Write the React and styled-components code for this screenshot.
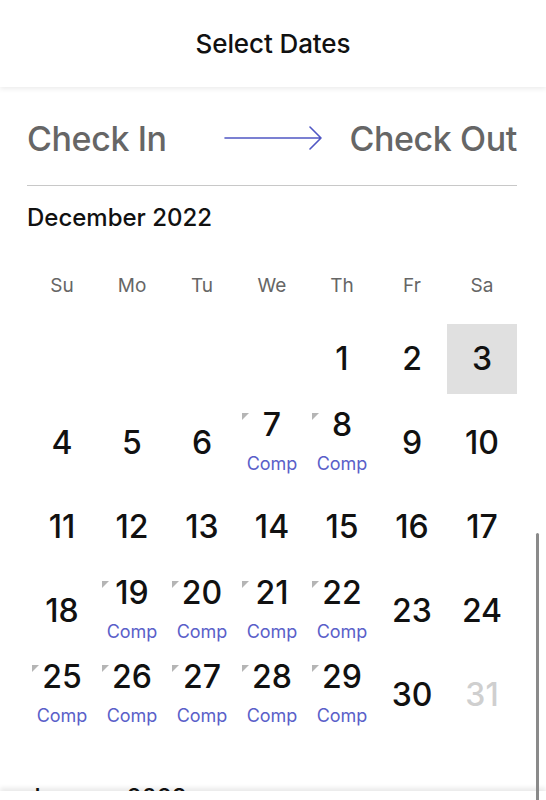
import React from "react";
import styled, { createGlobalStyle } from "styled-components";

const Global = createGlobalStyle`
  html, body { margin: 0; padding: 0; background: #fff; }
  body { font-family: Inter, "Noto Sans", sans-serif; overflow: hidden; height: 800px; }
  * { box-sizing: border-box; }
`;

const Page = styled.div`
  position: relative;
  width: 546px;
  height: 800px;
  overflow: hidden;
  background: #fff;
`;

const Header = styled.header`
  height: 87px;
  display: flex;
  align-items: center;
  justify-content: center;
  font-size: 26px;
  font-weight: 500;
  letter-spacing: -0.1px;
  color: #111;
  box-shadow: 0 2px 5px rgba(0, 0, 0, 0.08);
  position: relative;
  z-index: 2;
`;

const Body = styled.main`
  padding: 0 29px 0 27px;
`;

const RangeRow = styled.div`
  height: 60px;
  margin-top: 21px;
  display: grid;
  grid-template-columns: 1fr auto 1fr;
  align-items: center;
  font-size: 34px;
  letter-spacing: -0.4px;
  color: #666;
  font-weight: 500;
`;

const RangeLabel = styled.span`
  justify-self: ${(p) => (p.$end ? "end" : "start")};
`;

const ArrowBox = styled.span`
  display: flex;
  margin-left: 4px;
`;

const Divider = styled.hr`
  margin: 17px 0 0;
  border: 0;
  border-top: 1.5px solid #c8c8c8;
`;

const MonthTitle = styled.h2`
  margin: ${(p) => p.$top}px 0 0;
  font-size: 24px;
  line-height: 30px;
  font-weight: 500;
  color: #111;
`;

const WeekRow = styled.div`
  display: grid;
  grid-template-columns: repeat(7, 70px);
  margin-top: 40px;
  height: 24px;
  align-items: center;
`;

const WeekDay = styled.div`
  text-align: center;
  font-size: 19px;
  color: #666;
`;

const Grid = styled.div`
  display: grid;
  grid-template-columns: repeat(7, 70px);
  grid-auto-rows: 70px;
  row-gap: 14px;
  margin-top: 27px;
`;

const Cell = styled.div`
  position: relative;
  display: flex;
  flex-direction: column;
  align-items: center;
  justify-content: ${(p) => (p.$comp ? "flex-start" : "center")};
  background: ${(p) => (p.$selected ? "#e0e0e0" : "transparent")};
`;

const Num = styled.span`
  font-size: 32px;
  line-height: 34px;
  font-weight: 500;
  color: ${(p) => (p.$disabled ? "#cfcfcf" : "#111")};
`;

const Comp = styled.span`
  font-size: 18px;
  line-height: 20px;
  color: #5a5fc9;
  margin-top: 12px;
`;

const Corner = styled.span`
  position: absolute;
  top: 5px;
  left: 5px;
  width: 0;
  height: 0;
  border-top: 7px solid #b5b5b5;
  border-right: 7px solid transparent;
`;

const Footer = styled.div`
  position: absolute;
  left: 0;
  right: 0;
  top: 791px;
  bottom: 0;
  background: #fff;
  box-shadow: 0 -3px 5px rgba(0, 0, 0, 0.09);
  z-index: 3;
`;

const Scrollbar = styled.div`
  position: absolute;
  left: 536px;
  top: 533px;
  width: 3px;
  height: 300px;
  border-radius: 2px;
  background: #8a8a8a;
  z-index: 4;
`;

const Arrow = () => (
  <svg width="100" height="26" viewBox="0 0 100 26" fill="none">
    <path d="M1 13H97M86 2L97 13L86 24" stroke="#5057c4" strokeWidth="1.6" strokeLinecap="round" strokeLinejoin="round" />
  </svg>
);

const comps = new Set([7, 8, 19, 20, 21, 22, 25, 26, 27, 28, 29]);
const days = ["Su", "Mo", "Tu", "We", "Th", "Fr", "Sa"];

export default function App() {
  const cells = [];
  for (let i = 0; i < 4; i++) cells.push(<Cell key={"e" + i} />);
  for (let d = 1; d <= 31; d++) {
    const c = comps.has(d);
    cells.push(
      <Cell key={d} $selected={d === 3} $comp={c}>
        {c && <Corner />}
        <Num $disabled={d === 31}>{d}</Num>
        {c && <Comp>Comp</Comp>}
      </Cell>
    );
  }
  return (
    <Page>
      <Global />
      <Header>Select Dates</Header>
      <Body>
        <RangeRow>
          <RangeLabel>Check In</RangeLabel>
          <ArrowBox>
            <Arrow />
          </ArrowBox>
          <RangeLabel $end>Check Out</RangeLabel>
        </RangeRow>
        <Divider />
        <MonthTitle $top={17}>December 2022</MonthTitle>
        <WeekRow>
          {days.map((d) => (
            <WeekDay key={d}>{d}</WeekDay>
          ))}
        </WeekRow>
        <Grid>{cells}</Grid>
        <MonthTitle $top={53}>January 2023</MonthTitle>
      </Body>
      <Footer />
      <Scrollbar />
    </Page>
  );
}
